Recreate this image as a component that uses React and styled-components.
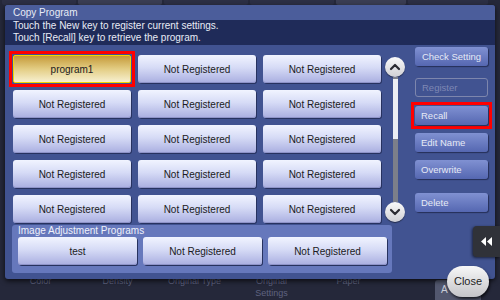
import React from "react";
import styled, { createGlobalStyle, css } from "styled-components";

const GlobalStyle = createGlobalStyle`
  html, body {
    margin: 0;
    padding: 0;
    background: #25283a;
  }
  body {
    font-family: "Liberation Sans", Arial, sans-serif;
  }
`;

const Screen = styled.div`
  position: relative;
  width: 500px;
  height: 300px;
  overflow: hidden;
  background: #25283a;
  display: flex;
  flex-direction: column;
  justify-content: space-between;
`;

const TopStrip = styled.div`
  height: 5px;
  display: flex;
  gap: 2px;
  padding-left: 2px;
`;

const BgTab = styled.div`
  width: ${(p) => p.$w}px;
  background: ${(p) => (p.$light ? "#3a3d52" : "#2c2f44")};
  border-radius: 0 0 2px 2px;
`;

const BottomBar = styled.div`
  height: 25px;
  display: flex;
  align-items: flex-start;
  padding-left: 2px;
`;

const BgLabel = styled.div`
  width: 77px;
  text-align: center;
  font-size: 9px;
  line-height: 12px;
  color: #5f6380;
`;

const BgButton = styled.div`
  margin-left: 48px;
  margin-top: 5px;
  width: 46px;
  height: 22px;
  background: #52576e;
  border-radius: 3px;
  font-size: 10px;
  line-height: 20px;
  color: #c8ccd8;
  padding-left: 6px;
  box-sizing: border-box;
`;

const Dialog = styled.div`
  position: absolute;
  left: 5px;
  top: 5px;
  width: 490px;
  height: 274px;
  background: #415391;
  border-radius: 3px;
  box-shadow: 0 2px 5px rgba(0, 0, 0, 0.7);
  display: flex;
  flex-direction: column;
`;

const TitleBar = styled.div`
  height: 15px;
  line-height: 15px;
  padding-left: 8px;
  font-size: 10px;
  color: #e8ecf6;
  background: #4b5d9b;
  border-radius: 3px 3px 0 0;
`;

const Instructions = styled.div`
  height: 25px;
  padding: 0 8px;
  background: #1f2b59;
  font-size: 10px;
  line-height: 12px;
  color: #e8ecf6;
`;

const Body = styled.div`
  display: flex;
  padding: 2px 0 0 8px;
`;

const LeftCol = styled.div`
  width: 368px;
  flex-shrink: 0;
  display: flex;
  flex-direction: column;
  margin-top: 8px;
`;

const Grid = styled.div`
  display: grid;
  grid-template-columns: repeat(3, 118px);
  grid-auto-rows: 28px;
  gap: 7px;
`;

const Highlight = styled.div`
  margin: -4px;
  margin-top: ${(p) => (p.$mt || 0) - 4}px;
  border: 3px solid #ff0000;
  padding: 1px;
  display: flex;
  flex-direction: column;
`;

const ProgramButton = styled.button`
  width: ${(p) => p.$w || 118}px;
  height: 28px;
  flex-shrink: 0;
  padding: 0;
  border: none;
  border-radius: 3px;
  font-family: inherit;
  font-size: 10px;
  color: #1a1a22;
  background: linear-gradient(#f1f4ff 0%, #d6dbf6 45%, #a9aee0 100%);
  box-shadow: 1px 1px 0 #27325f, inset 0 -1px 0 #8e93c8;
  ${(p) =>
    p.$selected &&
    css`
      background: linear-gradient(#c59a3a 0%, #e3cd84 50%, #f7f0d0 100%);
      border: 1px solid #f2d600;
      border-radius: 2px;
      box-shadow: none;
    `}
`;

const Panel = styled.div`
  margin: 2px 0 0 -1px;
  width: 380px;
  flex-shrink: 0;
  height: 48px;
  box-sizing: border-box;
  padding: 0 5px 0 6px;
  background: #6678bc;
  border-radius: 3px;
`;

const PanelLabel = styled.div`
  height: 12px;
  font-size: 10px;
  line-height: 12px;
  color: #eef1fb;
`;

const PanelRow = styled.div`
  display: flex;
  gap: 6px;
`;

const ScrollCol = styled.div`
  margin: 10px 0 0 4px;
  width: 20px;
  display: flex;
  flex-direction: column;
  align-items: center;
`;

const RoundButton = styled.div`
  width: 20px;
  height: 20px;
  border-radius: 50%;
  background: linear-gradient(#fafafa, #cfcfd4);
  box-shadow: 0 1px 1px rgba(0, 0, 0, 0.5);
  display: flex;
  align-items: center;
  justify-content: center;
`;

const Track = styled.div`
  width: 5px;
  height: 125px;
  background: #7c7f8a;
  display: flex;
  flex-direction: column;
  padding-top: 2px;
  box-sizing: border-box;
`;

const Thumb = styled.div`
  height: 60px;
  background: #eceef4;
`;

const RightCol = styled.div`
  margin-left: 10px;
  width: 73px;
  display: flex;
  flex-direction: column;
`;

const SideButton = styled.div`
  height: 19px;
  margin-top: ${(p) => p.$mt || 0}px;
  box-sizing: border-box;
  padding-left: ${(p) => (p.$center ? 0 : 6)}px;
  text-align: ${(p) => (p.$center ? "center" : "left")};
  font-size: 9.5px;
  line-height: 19px;
  color: #e6eaf6;
  border-radius: 3px;
  background: linear-gradient(#8091d2, #5567b1);
  box-shadow: 1px 1px 1px #252f58;
  ${(p) =>
    p.$disabled &&
    css`
      background: transparent;
      border: 1px solid #7d86ad;
      color: #7f88b4;
      box-shadow: none;
      line-height: 17px;
    `}
`;

const SideTab = styled.div`
  position: absolute;
  right: 0;
  top: 226px;
  width: 27px;
  height: 31px;
  background: #303239;
  border-radius: 4px 0 0 4px;
  box-shadow: -1px 1px 3px rgba(0, 0, 0, 0.6);
  display: flex;
  align-items: center;
  justify-content: center;
`;

const CloseButton = styled.div`
  position: absolute;
  left: 447px;
  top: 266px;
  width: 42px;
  height: 31px;
  border-radius: 16px;
  background: linear-gradient(#f7f7f7, #c4c4c8);
  box-shadow: 1px 2px 3px rgba(0, 0, 0, 0.7);
  font-size: 11px;
  line-height: 31px;
  text-align: center;
  color: #1e1e24;
`;

const Chevron = ({ up }) => (
  <svg width="12" height="12" viewBox="0 0 12 12">
    <polyline
      points={up ? "2,8 6,4 10,8" : "2,4 6,8 10,4"}
      fill="none"
      stroke="#2a2a30"
      strokeWidth="2.2"
      strokeLinecap="round"
      strokeLinejoin="round"
    />
  </svg>
);

const DoubleLeft = () => (
  <svg width="11" height="9" viewBox="0 0 11 9">
    <polygon points="5,0 5,9 0,4.5" fill="#fff" />
    <polygon points="11,0 11,9 6,4.5" fill="#fff" />
  </svg>
);

const programs = Array.from({ length: 14 }, () => "Not Registered");

export default function App() {
  return (
    <>
      <GlobalStyle />
      <Screen>
        <TopStrip>
          <BgTab $w={74} />
          <BgTab $w={84} $light />
          <BgTab $w={84} />
          <BgTab $w={84} />
          <BgTab $w={70} $light />
          <BgTab $w={80} />
        </TopStrip>
        <BottomBar>
          <BgLabel>Color</BgLabel>
          <BgLabel>Density</BgLabel>
          <BgLabel>Original Type</BgLabel>
          <BgLabel>
            Original
            <br />
            Settings
          </BgLabel>
          <BgLabel>Paper</BgLabel>
          <BgButton>A</BgButton>
        </BottomBar>

        <Dialog>
          <TitleBar>Copy Program</TitleBar>
          <Instructions>
            Touch the New key to register current settings.
            <br />
            Touch [Recall] key to retrieve the program.
          </Instructions>
          <Body>
            <LeftCol>
              <Grid>
                <Highlight>
                  <ProgramButton $selected>program1</ProgramButton>
                </Highlight>
                {programs.map((name, i) => (
                  <ProgramButton key={i}>{name}</ProgramButton>
                ))}
              </Grid>
              <Panel>
                <PanelLabel>Image Adjustment Programs</PanelLabel>
                <PanelRow>
                  <ProgramButton $w={119}>test</ProgramButton>
                  <ProgramButton $w={119}>Not Registered</ProgramButton>
                  <ProgramButton $w={119}>Not Registered</ProgramButton>
                </PanelRow>
              </Panel>
            </LeftCol>
            <ScrollCol>
              <RoundButton>
                <Chevron up />
              </RoundButton>
              <Track>
                <Thumb />
              </Track>
              <RoundButton>
                <Chevron />
              </RoundButton>
            </ScrollCol>
            <RightCol>
              <SideButton $center>Check Setting</SideButton>
              <SideButton $mt={12} $disabled>
                Register
              </SideButton>
              <Highlight $mt={9}>
                <SideButton>Recall</SideButton>
              </Highlight>
              <SideButton $mt={8}>Edit Name</SideButton>
              <SideButton $mt={8}>Overwrite</SideButton>
              <SideButton $mt={14}>Delete</SideButton>
            </RightCol>
          </Body>
        </Dialog>

        <SideTab>
          <DoubleLeft />
        </SideTab>
        <CloseButton>Close</CloseButton>
      </Screen>
    </>
  );
}
